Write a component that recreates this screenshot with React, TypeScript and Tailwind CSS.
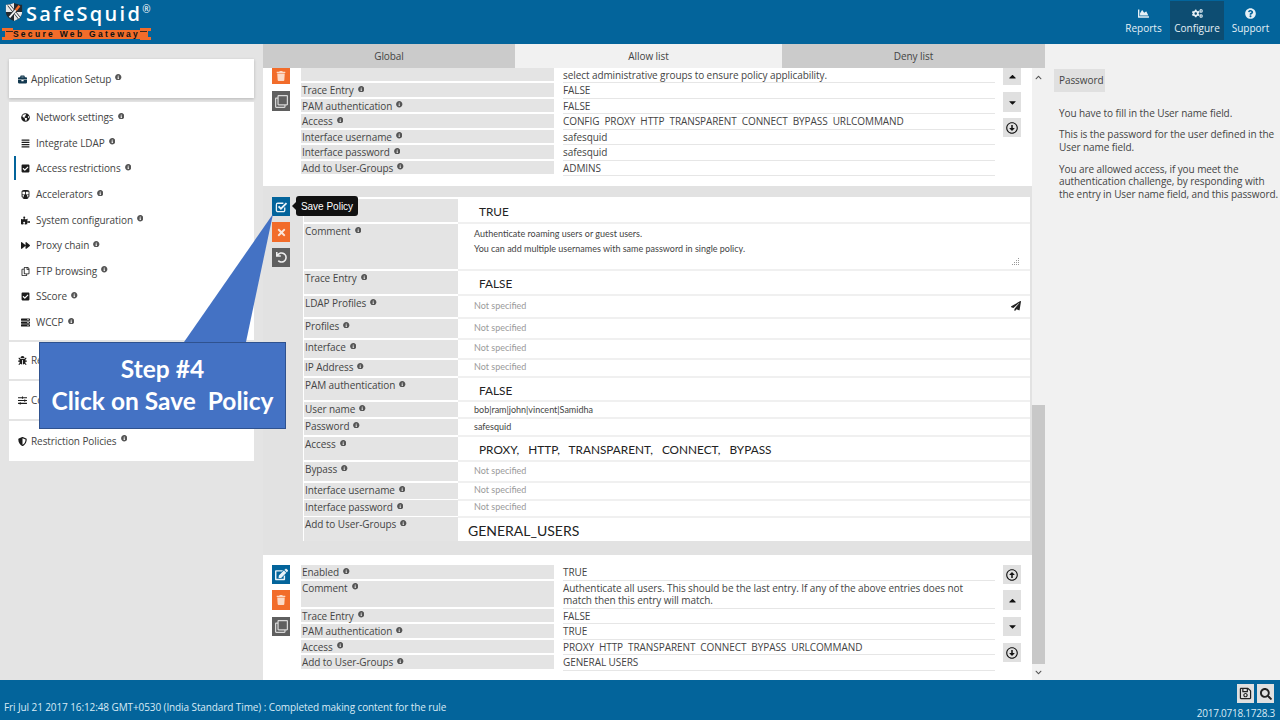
import type { ReactNode } from "react";
import {
  FaAlignJustify,
  FaBriefcase,
  FaBug,
  FaCaretDown,
  FaCaretUp,
  FaChartArea,
  FaCheckSquare,
  FaChevronDown,
  FaChevronUp,
  FaCogs,
  FaEdit,
  FaForward,
  FaGlobeAmericas,
  FaInfoCircle,
  FaPaperPlane,
  FaPuzzlePiece,
  FaQuestionCircle,
  FaRegArrowAltCircleDown,
  FaRegArrowAltCircleUp,
  FaRegClone,
  FaRegCopy,
  FaRegSave,
  FaSearch,
  FaServer,
  FaShieldAlt,
  FaSlidersH,
  FaSubway,
  FaTimes,
  FaTrash,
  FaUndo,
} from "react-icons/fa";

const ui = "font-['Open_Sans','Noto_Sans',sans-serif]";

function Info() {
  return <FaInfoCircle className="ml-[4px] -mt-[5px] inline-block align-middle text-[6.5px] text-[#555]" />;
}

function NavItem({ icon, label, active }: { icon: ReactNode; label: string; active?: boolean }) {
  return (
    <div className="relative flex h-[25.6px] items-center pl-[12px] text-[10px] tracking-[-0.08px] text-[#444]">
      {active && <span className="absolute left-[5px] top-0 h-[24px] w-[2px] bg-[#03649b]" />}
      <span className="flex w-[15px] text-[9px] text-[#1c1c1c]">{icon}</span>
      <span>
        {label}
        <Info />
      </span>
    </div>
  );
}

function Sidebar() {
  return (
    <aside className="flex w-[263px] shrink-0 flex-col pl-[9px] pr-[9px] pt-[15px] tracking-[-0.08px]">
      <div className="flex h-[39px] items-center bg-white pl-[9px] pt-[2px] text-[10px] text-[#444] shadow-[0_1px_3px_rgba(0,0,0,0.2)]">
        <FaBriefcase className="mr-[4px] text-[9px] text-[#12384f]" />
        Application Setup
        <Info />
      </div>
      <div className="mt-[4px] h-[238px] bg-white pt-[3px]">
        <NavItem icon={<FaGlobeAmericas />} label="Network settings" />
        <NavItem icon={<FaAlignJustify />} label="Integrate LDAP" />
        <NavItem icon={<FaCheckSquare />} label="Access restrictions" active />
        <NavItem icon={<FaSubway />} label="Accelerators" />
        <NavItem icon={<FaPuzzlePiece />} label="System configuration" />
        <NavItem icon={<FaForward />} label="Proxy chain" />
        <NavItem icon={<FaRegCopy />} label="FTP browsing" />
        <NavItem icon={<FaCheckSquare />} label="SScore" />
        <NavItem icon={<FaServer />} label="WCCP" />
      </div>
      <div className="mt-[2px] flex h-[37px] items-center bg-white pl-[9px] text-[10px] text-[#444]">
        <FaBug className="mr-[4px] text-[9px] text-[#1c1c1c]" />
        Reports
      </div>
      <div className="mt-[2px] flex h-[38px] items-center bg-white pl-[9px] text-[10px] text-[#444]">
        <FaSlidersH className="mr-[4px] text-[9px] text-[#1c1c1c]" />
        Configuration
      </div>
      <div className="mt-[2px] flex h-[40px] items-center bg-white pl-[9px] text-[10px] text-[#444]">
        <FaShieldAlt className="mr-[4px] text-[9px] text-[#1c1c1c]" />
        Restriction Policies
        <Info />
      </div>
    </aside>
  );
}

function ActionBtn({ color, className, children }: { color: string; className: string; children: ReactNode }) {
  return <div className={`flex w-[18px] items-center justify-center ${color} ${className}`}>{children}</div>;
}

function MoveBtn({ className, children }: { className: string; children: ReactNode }) {
  return (
    <div className={`flex w-[18px] items-center justify-center bg-[#e0e0e0] text-[#111] ${className}`}>{children}</div>
  );
}

function ViewRow({ label, value, h, info = true }: { label: string; value: ReactNode; h: string; info?: boolean }) {
  return (
    <div className={`grid grid-cols-[253px_432px] gap-x-[9px] text-[10px] leading-[12px] tracking-[-0.08px] text-[#444] ${h}`}>
      <div className="mb-[2px] bg-[#e4e4e4] pl-[1px] pt-[1px]">
        {label}
        {info && <Info />}
      </div>
      <div className="border-b border-[#e6e6e6] pr-[30px] pt-[1px]">{value}</div>
    </div>
  );
}

type EditRow = {
  label: string;
  h: string;
  kind: "big" | "muted" | "plain" | "comment";
  value?: string;
};

const editRows: EditRow[] = [
  { label: "", h: "h-[25px]", kind: "big", value: "TRUE" },
  { label: "Comment", h: "h-[47px]", kind: "comment" },
  { label: "Trace Entry", h: "h-[25px]", kind: "big", value: "FALSE" },
  { label: "LDAP Profiles", h: "h-[23px]", kind: "muted" },
  { label: "Profiles", h: "h-[21px]", kind: "muted" },
  { label: "Interface", h: "h-[20px]", kind: "muted" },
  { label: "IP Address", h: "h-[18px]", kind: "muted" },
  { label: "PAM authentication", h: "h-[24px]", kind: "big", value: "FALSE" },
  { label: "User name", h: "h-[17px]", kind: "plain", value: "bob|ram|john|vincent|Samidha" },
  { label: "Password", h: "h-[18px]", kind: "plain", value: "safesquid" },
  { label: "Access", h: "h-[25px]", kind: "big", value: "PROXY,   HTTP,   TRANSPARENT,   CONNECT,   BYPASS" },
  { label: "Bypass", h: "h-[21px]", kind: "muted" },
  { label: "Interface username", h: "h-[17px]", kind: "muted" },
  { label: "Interface password", h: "h-[17px]", kind: "muted" },
];

function EditValue({ row }: { row: EditRow }) {
  if (row.kind === "big") {
    return (
      <div className="whitespace-pre pl-[21px] pt-[5px] font-['Lato',sans-serif] text-[11.8px] leading-[16px] text-[#222]">
        {row.value}
      </div>
    );
  }
  if (row.kind === "comment") {
    return (
      <div className="relative h-full pl-[16px] pt-[3px] font-['Lato',sans-serif] text-[9px] leading-[14.5px] text-[#444]">
        <div>Authenticate roaming users or guest users.</div>
        <div>You can add multiple usernames with same password in single policy.</div>
        <svg viewBox="0 0 8 8" className="absolute bottom-[3px] right-[10px] h-[8px] w-[8px] text-[#999]" fill="currentColor">
          <rect x="6" y="0" width="1" height="1" />
          <rect x="4" y="2" width="1" height="1" />
          <rect x="6" y="2" width="1" height="1" />
          <rect x="2" y="4" width="1" height="1" />
          <rect x="4" y="4" width="1" height="1" />
          <rect x="6" y="4" width="1" height="1" />
          <rect x="0" y="6" width="1" height="1" />
          <rect x="2" y="6" width="1" height="1" />
          <rect x="4" y="6" width="1" height="1" />
          <rect x="6" y="6" width="1" height="1" />
        </svg>
      </div>
    );
  }
  if (row.kind === "plain") {
    return <div className="pl-[16px] pt-[1px] font-['Lato',sans-serif] text-[9px] leading-[13px] text-[#444]">{row.value}</div>;
  }
  return (
    <div className="flex h-full items-center justify-between pb-[2px] pl-[16px] pr-[9px] font-['Lato',sans-serif] text-[9px] text-[#9a9a9a]">
      Not specified
      {row.label === "LDAP Profiles" && <FaPaperPlane className="text-[10px] text-[#222]" />}
    </div>
  );
}

function TopBlock() {
  return (
    <section className="flex h-[118px] shrink-0 overflow-hidden bg-white pl-[9px]">
      <div className="flex w-[29px] shrink-0 flex-col">
        <ActionBtn color="bg-[#f26c2a] text-[#fbd9c6] text-[10px]" className="h-[16px]">
          <FaTrash />
        </ActionBtn>
        <ActionBtn color="bg-[#5f5f5f] text-[#d8d8d8] text-[13px]" className="mt-[7px] h-[20px]">
          <FaRegClone />
        </ActionBtn>
      </div>
      <div className="w-[694px] shrink-0">
        <ViewRow h="h-[15px]" info={false} label="" value="select administrative groups to ensure policy applicability." />
        <ViewRow h="h-[15.5px]" label="Trace Entry" value="FALSE" />
        <ViewRow h="h-[15.5px]" label="PAM authentication" value="FALSE" />
        <ViewRow h="h-[15.5px]" label="Access" value={<span className="whitespace-pre">CONFIG  PROXY  HTTP  TRANSPARENT  CONNECT  BYPASS  URLCOMMAND</span>} />
        <ViewRow h="h-[15.5px]" label="Interface username" value="safesquid" />
        <ViewRow h="h-[15.5px]" label="Interface password" value="safesquid" />
        <ViewRow h="h-[15.5px]" label="Add to User-Groups" value="ADMINS" />
      </div>
      <div className="ml-[8px] flex w-[18px] shrink-0 flex-col">
        <MoveBtn className="h-[17px] text-[11px]">
          <FaCaretUp />
        </MoveBtn>
        <MoveBtn className="mt-[7px] h-[20px] text-[11px]">
          <FaCaretDown />
        </MoveBtn>
        <MoveBtn className="mt-[6px] h-[19px] text-[12px]">
          <FaRegArrowAltCircleDown />
        </MoveBtn>
      </div>
    </section>
  );
}

function EditBlock() {
  return (
    <section className="flex h-[369px] shrink-0 bg-[#e2e2e2] pl-[9px] pt-[11px]">
      <div className="flex w-[31px] shrink-0 flex-col">
        <ActionBtn color="bg-[#03649b] text-[#eef5f9] text-[13px]" className="h-[19px]">
          <svg viewBox="0 0 14 14" className="h-[13px] w-[13px]" fill="none" stroke="currentColor">
            <path d="M10.5 8v3a1.5 1.5 0 0 1-1.5 1.5H3A1.5 1.5 0 0 1 1.5 11V5A1.5 1.5 0 0 1 3 3.5h6" strokeWidth="1.4" />
            <path d="M3.8 6.8l2.6 2.6 6-6" strokeWidth="2" />
          </svg>
        </ActionBtn>
        <ActionBtn color="bg-[#f26c2a] text-[#fbe6da] text-[11px]" className="mt-[6px] h-[20px]">
          <FaTimes />
        </ActionBtn>
        <ActionBtn color="bg-[#5f5f5f] text-[#eeeeee] text-[11px]" className="mt-[6px] h-[19px]">
          <FaUndo />
        </ActionBtn>
      </div>
      <div className="h-[344px] w-[727px] shrink-0 bg-white pt-[2px] text-[10px] tracking-[-0.08px] text-[#444]">
        {editRows.map((row) => (
          <div key={row.label} className={`grid grid-cols-[155px_1fr] ${row.h}`}>
            <div className="mb-[2px] ml-[1px] bg-[#e4e4e4] pl-[1px] pt-[1px] leading-[12px]">
              {row.label}
              {row.label && <Info />}
            </div>
            <div className="border-b-2 border-[#f0f0f0] tracking-normal">
              <EditValue row={row} />
            </div>
          </div>
        ))}
        <div className="grid h-[24px] grid-cols-[155px_1fr]">
          <div className="ml-[1px] bg-[#e4e4e4] pl-[1px] pt-[1px] leading-[12px]">
            Add to User-Groups
            <Info />
          </div>
          <div className="pl-[10px] pt-[5px] font-['Lato',sans-serif] text-[14px] leading-[18px] tracking-normal text-[#222]">
            GENERAL_USERS
          </div>
        </div>
      </div>
    </section>
  );
}

function BottomBlock() {
  return (
    <section className="flex h-[125px] shrink-0 bg-white pl-[9px] pt-[10px]">
      <div className="flex w-[29px] shrink-0 flex-col">
        <ActionBtn color="bg-[#03649b] text-[#e8f2f8] text-[13px]" className="h-[19px]">
          <FaEdit />
        </ActionBtn>
        <ActionBtn color="bg-[#f26c2a] text-[#fbd9c6] text-[10px]" className="mt-[6px] h-[20px]">
          <FaTrash />
        </ActionBtn>
        <ActionBtn color="bg-[#5f5f5f] text-[#d8d8d8] text-[13px]" className="mt-[7px] h-[19px]">
          <FaRegClone />
        </ActionBtn>
      </div>
      <div className="w-[694px] shrink-0">
        <ViewRow h="h-[15.5px]" label="Enabled" value="TRUE" />
        <ViewRow
          h="h-[28px]"
          label="Comment"
          value="Authenticate all users. This should be the last entry. If any of the above entries does not match then this entry will match."
        />
        <ViewRow h="h-[15.5px]" label="Trace Entry" value="FALSE" />
        <ViewRow h="h-[15.5px]" label="PAM authentication" value="TRUE" />
        <ViewRow h="h-[15.5px]" label="Access" value={<span className="whitespace-pre">PROXY  HTTP  TRANSPARENT  CONNECT  BYPASS  URLCOMMAND</span>} />
        <ViewRow h="h-[15.5px]" label="Add to User-Groups" value="GENERAL USERS" />
      </div>
      <div className="ml-[8px] flex w-[18px] shrink-0 flex-col">
        <MoveBtn className="h-[19px] text-[12px]">
          <FaRegArrowAltCircleUp />
        </MoveBtn>
        <MoveBtn className="mt-[6px] h-[20px] text-[11px]">
          <FaCaretUp />
        </MoveBtn>
        <MoveBtn className="mt-[7px] h-[19px] text-[11px]">
          <FaCaretDown />
        </MoveBtn>
        <MoveBtn className="mt-[7px] h-[19px] text-[12px]">
          <FaRegArrowAltCircleDown />
        </MoveBtn>
      </div>
    </section>
  );
}

function Scrollbar() {
  return (
    <div className="flex w-[13px] shrink-0 flex-col bg-[#f1f1f1]">
      <div className="flex h-[337px] justify-center pt-[6px] text-[7px] text-[#555]">
        <FaChevronUp />
      </div>
      <div className="h-[259px] bg-[#c8c8c8]" />
      <div className="flex flex-1 items-center justify-center text-[7px] text-[#555]">
        <FaChevronDown />
      </div>
    </div>
  );
}

function Logo() {
  return (
    <div className="relative h-[44px] w-[160px]">
      <div className="flex items-start pl-[5px] pt-[2px]">
        <svg viewBox="0 0 20 22" className="h-[20px] w-[18px]">
          <path d="M1 3c3 0 6-1 9-2 3 1 6 2 9 2v8c0 5-4 8-9 10C5 19 1 16 1 11z" fill="#23292f" />
          <path d="M1 3c3 0 6-1 9-2v10H1zM10 11h9c0 5-4 8-9 10z" fill="#e8e8e8" />
          <path d="M4 3l12 15" stroke="#23292f" strokeWidth="3.4" />
          <path d="M4 3l12 15" stroke="#f4f4f4" strokeWidth="2" />
          <path d="M5 17L15 5" stroke="#23292f" strokeWidth="3.4" />
          <path d="M5 17L12 9" stroke="#f4f4f4" strokeWidth="2" />
          <path d="M12 9l4-5" stroke="#f26c2a" strokeWidth="2.6" />
        </svg>
        <span className="ml-[3px] font-['Open_Sans',sans-serif] text-[20px] font-semibold leading-[24px] tracking-[2.3px] text-white">
          SafeSquid
        </span>
        <span className="text-[10px] leading-[14px] text-white">®</span>
      </div>
      <svg viewBox="0 0 149 13" className="absolute left-[2px] top-[27px] h-[13px] w-[149px]">
        <path d="M0 1h11v2h127V1h11v3h-3v6h3v3h-11v-1H11v1H0v-3h3V4H0z" fill="#f26c2a" />
        <rect x="11" y="3" width="127" height="9" fill="#f26c2a" />
        <rect x="4" y="4" width="7" height="1" fill="#3a2a20" />
        <rect x="138" y="4" width="7" height="1" fill="#3a2a20" />
      </svg>
      <div className="absolute left-[2px] top-[29px] flex h-[10px] w-[149px] items-center justify-center font-['Liberation_Sans',sans-serif] text-[8.5px] font-bold tracking-[2.3px] text-[#111]">
        Secure Web Gateway
      </div>
    </div>
  );
}

function TopNav({ icon, label, active }: { icon: ReactNode; label: string; active?: boolean }) {
  return (
    <div
      className={`mt-[1px] flex h-[39px] flex-col items-center pt-[7px] text-[10px] leading-[14px] text-[#e6f0f6] ${
        active ? "w-[54px] bg-[#0d4d72]" : "w-[53px]"
      }`}
    >
      <span className="mb-[2px] text-[11px]">{icon}</span>
      {label}
    </div>
  );
}

export default function App() {
  return (
    <div className={`relative flex h-[720px] w-[1280px] flex-col overflow-hidden bg-[#f1f1f1] ${ui}`}>
      <header className="flex h-[44px] shrink-0 items-start justify-between bg-[#03649b] pr-[3px]">
        <Logo />
        <nav className="flex">
          <TopNav icon={<FaChartArea />} label="Reports" />
          <TopNav icon={<FaCogs />} label="Configure" active />
          <TopNav icon={<FaQuestionCircle />} label="Support" />
        </nav>
      </header>

      <div className="flex min-h-0 flex-1">
        <div className="flex bg-[#e4e4e4]">
          <Sidebar />
        </div>
        <main className="flex w-[782px] shrink-0 flex-col">
          <div className="grid h-[24px] shrink-0 grid-cols-[252px_267px_263px] text-center text-[10px] leading-[24px] tracking-[-0.08px] text-[#444]">
            <div className="bg-[#cbcbcb]">Global</div>
            <div className="bg-[#f1f1f1]">Allow list</div>
            <div className="bg-[#cbcbcb]">Deny list</div>
          </div>
          <div className="flex min-h-0 flex-1">
            <div className="flex w-[769px] shrink-0 flex-col">
              <TopBlock />
              <EditBlock />
              <BottomBlock />
            </div>
            <Scrollbar />
          </div>
        </main>
        <aside className="flex-1 pl-[9px] pr-[2px] pt-[25px] text-[10px] leading-[12.5px] tracking-[-0.08px] text-[#444]">
          <div className="h-[23px] w-[51px] bg-[#e0e0e0] pl-[5px] leading-[23px]">Password</div>
          <p className="mt-[15px] px-[5px]">You have to fill in the User name field.</p>
          <p className="mt-[8.5px] pl-[5px]">This is the password for the user defined in the User name field.</p>
          <p className="mt-[9.5px] pl-[5px]">
            You are allowed access, if you meet the authentication challenge, by responding with the entry in User name
            field, and this password.
          </p>
        </aside>
      </div>

      <footer className="flex h-[40px] shrink-0 justify-between bg-[#03649b] pl-[4px] pr-[5px]">
        <div className="pt-[20px] text-[10px] leading-[14px] tracking-[-0.1px] text-[#d8eaf5]">
          Fri Jul 21 2017 16:12:48 GMT+0530 (India Standard Time) : Completed making content for the rule
        </div>
        <div className="flex flex-col items-end pt-[4px]">
          <div className="mr-[1px] flex gap-[3px]">
            <div className="flex h-[19px] w-[17px] items-center justify-center bg-[#e0e0e0] text-[13px] text-[#222]">
              <FaRegSave />
            </div>
            <div className="flex h-[19px] w-[17px] items-center justify-center bg-[#e0e0e0] text-[12px] text-[#222]">
              <FaSearch />
            </div>
          </div>
          <div className="mt-[3px] text-[10px] leading-[14px] tracking-[-0.25px] text-[#d8eaf5]">2017.0718.1728.3</div>
        </div>
      </footer>

      {/* tooltip + tutorial callout drawn over the page */}
      <div className="absolute left-[296px] top-[196px] flex h-[20px] w-[62px] items-center justify-center rounded-[3px] bg-[#111] font-['Liberation_Sans',sans-serif] text-[10px] text-white">
        <span className="absolute -left-[4px] top-[6px] h-0 w-0 border-y-[4px] border-r-[4px] border-y-transparent border-r-[#111]" />
        Save Policy
      </div>
      <svg viewBox="0 0 320 260" className="absolute left-0 top-[190px] h-[260px] w-[320px]">
        <path d="M184 152L273 24L246 152Z" fill="#4472c4" />
      </svg>
      <div className="absolute left-[39px] top-[342px] flex h-[87px] w-[247px] flex-col items-center justify-center border border-[#2f528f] bg-[#4472c4] pb-[2px] font-['Lato',sans-serif] text-[24.5px] font-bold leading-[32px] text-white">
        <span>Step #4</span>
        <span className="whitespace-pre">Click on Save  Policy</span>
      </div>
    </div>
  );
}
